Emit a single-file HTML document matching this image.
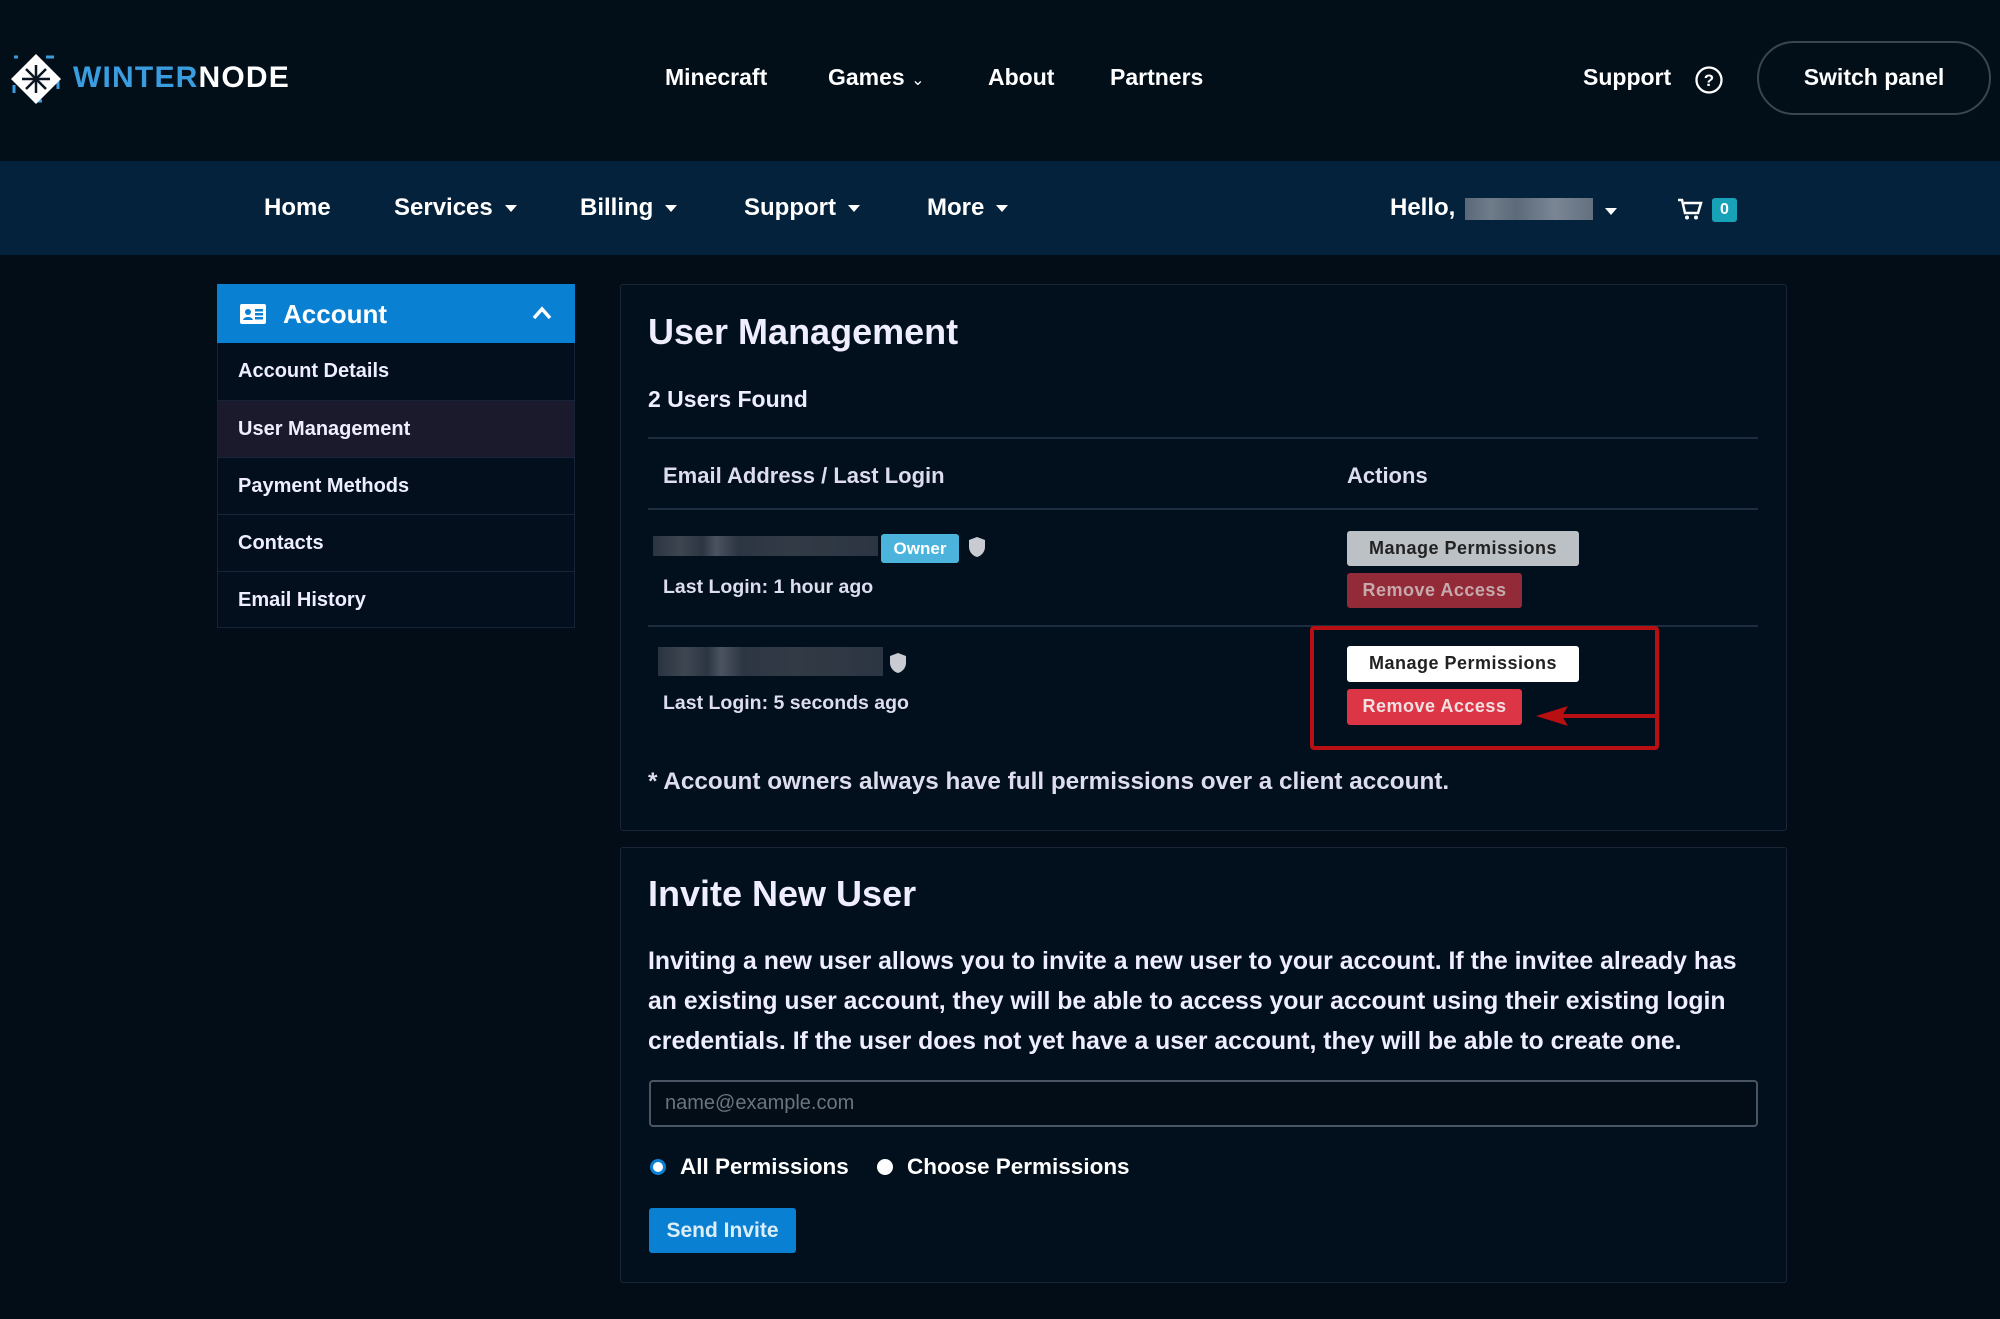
<!DOCTYPE html>
<html><head><meta charset="utf-8"><style>
*{margin:0;padding:0;box-sizing:border-box}
body{width:2000px;height:1319px;background:#020d18;font-family:"Liberation Sans",sans-serif;font-weight:bold;color:#fff;position:relative;overflow:hidden}
.a{position:absolute;white-space:nowrap}
.top{left:0;top:0;width:2000px;height:161px;background:#020f18}
.nav{left:0;top:161px;width:2000px;height:94px;background:#05223c}
.tn{font-size:23px;top:64px}
.nn{font-size:24px;top:194px}
.car{display:inline-block;width:0;height:0;border-left:6px solid transparent;border-right:6px solid transparent;border-top:7px solid #fff;vertical-align:middle;margin-left:12px}
.side{left:217px;top:284px;width:358px;height:344px;border:1px solid #16243a;background:#030f1d}
.si{position:absolute;left:0;width:356px;height:57px;border-top:1px solid #16243a;font-size:20px;padding:17px 0 0 20px;color:#eef}
.card{border:1px solid #1a2638;background:#020f1c;border-radius:3px}
.hr{position:absolute;height:2px;background:#1d2d40}
.btn{position:absolute;font-size:18px;padding-top:7px;border-radius:3px;text-align:center;letter-spacing:.5px}
.blur{position:absolute;background:linear-gradient(90deg,#2a3340 0%,#3e4652 12%,#2c3542 22%,#4b5360 28%,#2c3542 38%,#323a46 60%,#2c3542 100%)}
</style></head><body>
<div class="a top"></div>
<div class="a nav"></div>

<svg class="a" style="left:10px;top:53px" width="52" height="52" viewBox="0 0 52 52">
<rect x="4" y="4" width="44" height="44" fill="none" stroke="#3a9de0" stroke-width="3" stroke-dasharray="8 28" stroke-dashoffset="4"/>
<polygon points="26,1 51,26 26,51 1,26" fill="#fff"/>
<g stroke="#0a1622" stroke-width="2.5"><line x1="26" y1="12" x2="26" y2="40"/><line x1="12" y1="26" x2="40" y2="26"/><line x1="16" y1="16" x2="36" y2="36"/><line x1="36" y1="16" x2="16" y2="36"/></g>
</svg>
<div class="a" style="left:73px;top:61px;font-size:30px;letter-spacing:1.2px"><span style="color:#3a9de0">WINTER</span>NODE</div>

<div class="a tn" style="left:665px">Minecraft</div>
<div class="a tn" style="left:828px">Games <span style="font-size:16px;font-weight:normal">&#8964;</span></div>
<div class="a tn" style="left:988px">About</div>
<div class="a tn" style="left:1110px">Partners</div>
<div class="a tn" style="left:1583px">Support</div>
<svg class="a" style="left:1694px;top:65px" width="30" height="30" viewBox="0 0 30 30"><circle cx="15" cy="15" r="12.5" fill="none" stroke="#fff" stroke-width="2.3"/><text x="15" y="21" font-size="17" text-anchor="middle" fill="#fff" font-family="Liberation Sans" font-weight="bold">?</text></svg>
<div class="a" style="left:1757px;top:41px;width:234px;height:74px;border:2px solid #3a4552;border-radius:37px"></div>
<div class="a" style="left:1757px;top:64px;width:234px;text-align:center;font-size:23px">Switch panel</div>

<div class="a nn" style="left:264px">Home</div>
<div class="a nn" style="left:394px">Services<span class="car"></span></div>
<div class="a nn" style="left:580px">Billing<span class="car"></span></div>
<div class="a nn" style="left:744px">Support<span class="car"></span></div>
<div class="a nn" style="left:927px">More<span class="car"></span></div>
<div class="a nn" style="left:1390px">Hello,</div>
<div class="a" style="left:1465px;top:198px;width:128px;height:22px;background:linear-gradient(90deg,#5a6878 0%,#6f7c8a 20%,#5c6a7a 40%,#7a8694 70%,#63707f 100%)"></div>
<div class="a" style="left:1605px;top:203px"><span class="car" style="margin:0"></span></div>
<svg class="a" style="left:1677px;top:197px" width="26" height="24" viewBox="0 0 26 24"><path d="M1 3h4l3 13h13l3-10H7" fill="none" stroke="#fff" stroke-width="2.5"/><circle cx="10" cy="20.5" r="2" fill="#fff"/><circle cx="19" cy="20.5" r="2" fill="#fff"/></svg>
<div class="a" style="left:1712px;top:198px;width:25px;height:24px;background:#17a2b8;border-radius:3px;font-size:16px;text-align:center;padding-top:3px">0</div>

<div class="a side">
<div style="position:absolute;left:-1px;top:-1px;width:358px;height:59px;background:#0a80d2"></div>
<svg style="position:absolute;left:22px;top:19px" width="26" height="20" viewBox="0 0 26 20"><rect width="26" height="20" rx="2" fill="#fff"/><circle cx="8" cy="8" r="3" fill="#0a80d2"/><path d="M3 16c1-4 9-4 10 0z" fill="#0a80d2"/><rect x="15" y="5" width="8" height="2.5" fill="#0a80d2"/><rect x="15" y="9" width="8" height="2.5" fill="#0a80d2"/><rect x="15" y="13" width="8" height="2.5" fill="#0a80d2"/></svg>
<div style="position:absolute;left:65px;top:14px;font-size:26px">Account</div>
<svg style="position:absolute;left:313px;top:20px" width="22" height="16" viewBox="0 0 22 16"><path d="M3 13L11 4l8 9" fill="none" stroke="#fff" stroke-width="3.5"/></svg>
<div class="si" style="top:58px;border-top:none">Account Details</div>
<div class="si" style="top:115px;background:#1b1a2c">User Management</div>
<div class="si" style="top:172px">Payment Methods</div>
<div class="si" style="top:229px">Contacts</div>
<div class="si" style="top:286px">Email History</div>
</div>

<div class="a card" style="left:620px;top:284px;width:1167px;height:547px"></div>
<div class="a" style="left:648px;top:311px;font-size:36px;color:#eef">User Management</div>
<div class="a" style="left:648px;top:386px;font-size:23px;color:#eef">2 Users Found</div>
<div class="hr" style="left:648px;top:437px;width:1110px"></div>
<div class="a" style="left:663px;top:463px;font-size:22px;color:#dde">Email Address / Last Login</div>
<div class="a" style="left:1347px;top:463px;font-size:22px;color:#dde">Actions</div>
<div class="hr" style="left:648px;top:508px;width:1110px"></div>

<div class="blur" style="left:653px;top:536px;width:225px;height:20px"></div>
<div class="a" style="left:881px;top:534px;width:78px;height:29px;background:#4cb3dc;border-radius:3px;font-size:17px;text-align:center;padding-top:5px">Owner</div>
<svg class="a" style="left:968px;top:536px" width="18" height="22" viewBox="0 0 18 22"><path d="M9 1L1 4v7c0 5 4 9 8 10 4-1 8-5 8-10V4z" fill="#c8ccd2"/></svg>
<div class="a" style="left:663px;top:576px;font-size:19.5px;color:#dde">Last Login: 1 hour ago</div>
<div class="btn" style="left:1347px;top:531px;width:232px;height:35px;background:#bcc1c6;color:#222">Manage Permissions</div>
<div class="btn" style="left:1347px;top:573px;width:175px;height:35px;background:#932a37;color:#c6a9ad">Remove Access</div>
<div class="hr" style="left:648px;top:625px;width:1110px"></div>

<div class="blur" style="left:658px;top:647px;width:225px;height:29px"></div>
<svg class="a" style="left:889px;top:652px" width="18" height="22" viewBox="0 0 18 22"><path d="M9 1L1 4v7c0 5 4 9 8 10 4-1 8-5 8-10V4z" fill="#c8ccd2"/></svg>
<div class="a" style="left:663px;top:692px;font-size:19.5px;color:#dde">Last Login: 5 seconds ago</div>
<div class="btn" style="left:1347px;top:646px;width:232px;height:36px;background:#fff;color:#222">Manage Permissions</div>
<div class="btn" style="left:1347px;top:689px;width:175px;height:36px;background:#dc3545;color:#f0e0e2">Remove Access</div>

<div class="a" style="left:1310px;top:626px;width:349px;height:124px;border:4px solid #b80f12;border-radius:4px"></div>
<svg class="a" style="left:1530px;top:702px" width="130" height="28" viewBox="0 0 130 28"><line x1="30" y1="14" x2="128" y2="14" stroke="#b80f12" stroke-width="4"/><polygon points="6,14 38,4 32,14 38,24" fill="#b80f12"/></svg>

<div class="a" style="left:648px;top:768px;font-size:24.3px;color:#dde">* Account owners always have full permissions over a client account.</div>

<div class="a card" style="left:620px;top:847px;width:1167px;height:436px"></div>
<div class="a" style="left:648px;top:873px;font-size:36px;color:#eef">Invite New User</div>
<div class="a" style="left:648px;top:942px;font-size:24.8px;line-height:40px;color:#eef">Inviting a new user allows you to invite a new user to your account. If the invitee already has<br>an existing user account, they will be able to access your account using their existing login<br>credentials. If the user does not yet have a user account, they will be able to create one.</div>
<div class="a" style="left:649px;top:1080px;width:1109px;height:47px;border:2px solid #4a5563;border-radius:4px;background:#020d18"></div>
<div class="a" style="left:665px;top:1092px;font-size:20px;color:#6b7480;font-weight:normal">name@example.com</div>
<div class="a" style="left:650px;top:1159px;width:16px;height:16px;border:3px solid #0a80d2;border-radius:50%;background:#fff"></div>
<div class="a" style="left:680px;top:1154px;font-size:22.5px">All Permissions</div>
<div class="a" style="left:877px;top:1159px;width:16px;height:16px;border-radius:50%;background:#fff"></div>
<div class="a" style="left:907px;top:1154px;font-size:22.5px">Choose Permissions</div>
<div class="a" style="left:649px;top:1208px;width:147px;height:45px;background:#0a80d2;border-radius:3px;font-size:21px;text-align:center;padding-top:11px;color:#dceefa">Send Invite</div>
</body></html>
